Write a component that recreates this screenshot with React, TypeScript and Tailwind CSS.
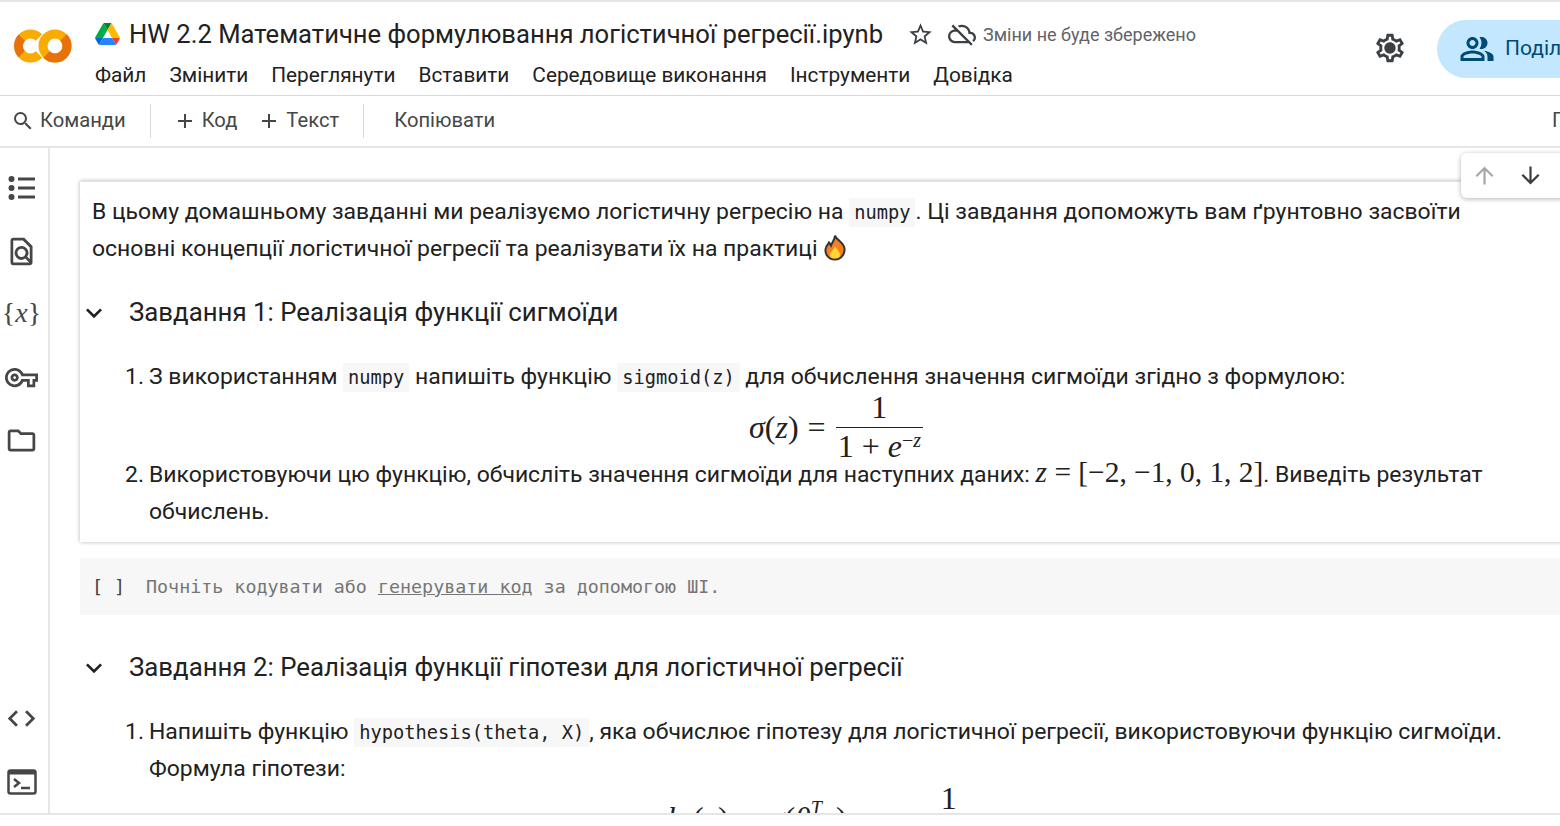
import {
  MdAdd,
  MdArrowDownward,
  MdArrowUpward,
  MdCode,
  MdKeyboardArrowDown,
  MdOutlineCloudOff,
  MdOutlineFindInPage,
  MdOutlineFolder,
  MdOutlinePeopleAlt,
  MdOutlineSettings,
  MdOutlineVpnKey,
  MdSearch,
  MdStarBorder,
} from 'react-icons/md';

const menu = ['Файл', 'Змінити', 'Переглянути', 'Вставити', 'Середовище виконання', 'Інструменти', 'Довідка'];

function ColabLogo() {
  return (
    <svg width="58" height="34" viewBox="0 0 58 34" className="shrink-0">
      <circle cx="41" cy="17" r="12" fill="none" stroke="#f9ab00" strokeWidth="9" />
      <path d="M49.500 8.500A12 12 0 0 1 32.500 25.500" fill="none" stroke="#e8710a" strokeWidth="9" />
      <path d="M25 8.500A12 12 0 0 0 8 8.500" fill="none" stroke="#f9ab00" strokeWidth="9" />
      <path d="M8 8.500A12 12 0 0 0 8 25.500" fill="none" stroke="#e8710a" strokeWidth="9" />
      <path d="M8 25.500A12 12 0 0 0 25 25.500" fill="none" stroke="#f9ab00" strokeWidth="9" />
    </svg>
  );
}

function DriveLogo() {
  return (
    <svg width="25" height="22" viewBox="0 0 87.3 78" className="shrink-0">
      <path d="m6.6 66.85 3.85 6.65c.8 1.4 1.95 2.5 3.3 3.3l13.75-23.8h-27.5c0 1.55.4 3.1 1.2 4.5z" fill="#0066da" />
      <path d="m43.65 25-13.75-23.8c-1.35.8-2.5 1.9-3.3 3.3l-25.4 44a9.06 9.06 0 0 0 -1.2 4.5h27.5z" fill="#00ac47" />
      <path d="m73.55 76.8c1.35-.8 2.5-1.9 3.3-3.3l1.6-2.75 7.65-13.25c.8-1.4 1.2-2.95 1.2-4.5h-27.502l5.852 11.5z" fill="#ea4335" />
      <path d="m43.65 25 13.75-23.8c-1.35-.8-2.9-1.2-4.5-1.2h-18.5c-1.6 0-3.15.45-4.5 1.2z" fill="#00832d" />
      <path d="m59.8 53h-32.3l-13.75 23.8c1.35.8 2.9 1.2 4.5 1.2h50.8c1.6 0 3.15-.45 4.5-1.2z" fill="#2684fc" />
      <path d="m73.4 26.5-12.7-22c-.8-1.4-1.95-2.5-3.3-3.3l-13.75 23.8 16.15 28h27.45c0-1.55-.4-3.1-1.2-4.5z" fill="#ffba00" />
    </svg>
  );
}

function Flame() {
  return (
    <svg width="24" height="27" viewBox="0 0 24 27" className="inline-block align-[-5px]">
      <path d="M12 1.500c1 4 7 6 9 11 2 6-2 13-9 13S1 19.500 3 13.500c.6-2 2-3 3-5 1 1 1.500 2 2 3 1-3 4-6 4-10z" fill="#f4811f" stroke="#333" strokeWidth="2" />
      <path d="M12 12c1 3 5 5 5 9 0 2.500-2 3.500-5 3.500s-5-1-5-3.500c0-3 4-5 5-9z" fill="#fdd835" />
    </svg>
  );
}

function ListIcon() {
  return (
    <svg width="28" height="24" viewBox="0 0 28 24" className="shrink-0">
      <circle cx="3.500" cy="3" r="3" fill="#444746" />
      <circle cx="3.500" cy="12" r="3" fill="#444746" />
      <circle cx="3.500" cy="21" r="3" fill="#444746" />
      <path d="M10 3h17M10 12h17M10 21h17" stroke="#444746" strokeWidth="3" />
    </svg>
  );
}

function Code({children}: {children: React.ReactNode}) {
  return (
    <code className="bg-[#f7f7f7] px-[5px] py-[4px] font-['DejaVu_Sans_Mono','Liberation_Mono',monospace] text-[18.7px] leading-none text-[#212121]">
      {children}
    </code>
  );
}

function Var({children}: {children: React.ReactNode}) {
  return <span className="italic">{children}</span>;
}

function Heading({children}: {children: React.ReactNode}) {
  return (
    <div className="flex h-[37px] items-center text-[25.8px] text-[#212121]">
      <MdKeyboardArrowDown size={32} className="ml-[-14px] mr-[19px] shrink-0 text-[#212121]" />
      <span>{children}</span>
    </div>
  );
}

function Item({n, children}: {n: number; children: React.ReactNode}) {
  return (
    <div className="flex pl-[33px]">
      <span className="w-[24px] shrink-0">{n}.</span>
      <div className="min-w-0 flex-1">{children}</div>
    </div>
  );
}

function Fraction({top, bottom}: {top: React.ReactNode; bottom: React.ReactNode}) {
  return (
    <span className="inline-flex flex-col items-center">
      <span className="px-[2px] leading-[40px]">{top}</span>
      <span className="h-px w-full bg-[#212121]" />
      <span className="px-[2px] leading-[36px]">{bottom}</span>
    </span>
  );
}

export default function App() {
  const serif = "font-['Liberation_Serif',serif]";

  return (
    <div className="flex h-[826px] w-[1560px] flex-col overflow-hidden bg-white font-['Roboto',sans-serif] text-[#212121]">
      <div className="h-[2px] shrink-0 bg-[#e6e6e6]" />

      <header className="flex h-[94px] shrink-0 items-start border-b border-[#dadada]">
        <div className="ml-[14px] mt-[27px]">
          <ColabLogo />
        </div>
        <div className="ml-[23px] flex-1 pt-[16px]">
          <div className="flex h-[32px] items-center">
            <DriveLogo />
            <span className="ml-[9px] text-[25.6px] text-[#212121]">
              HW 2.2 Математичне формулювання логістичної регресії.ipynb
            </span>
            <MdStarBorder size={27} className="ml-[24px] text-[#3c4043]" />
            <MdOutlineCloudOff size={28} className="ml-[14px] text-[#3c4043]" />
            <span className="ml-[7px] text-[18px] text-[#5f6368]">Зміни не буде збережено</span>
          </div>
          <nav className="mt-[10px] flex gap-[23px] text-[20.8px] font-[450] text-[#212121]">
            {menu.map(item => (
              <span key={item}>{item}</span>
            ))}
          </nav>
        </div>
        <div className="relative mr-[30px] mt-[29px] shrink-0">
          <MdOutlineSettings size={34} className="text-[#3c4043]" />
          <span className="absolute left-[12px] top-[12px] size-[10px] rounded-full bg-[#3c4043]" />
        </div>
        <div className="mr-[-120px] mt-[18px] flex h-[58px] w-[243px] shrink-0 items-center rounded-[29px] bg-[#c2e7ff] pl-[22px]">
          <MdOutlinePeopleAlt size={36} className="shrink-0 text-[#004a77]" />
          <span className="ml-[10px] text-[21px] text-[#004a77]">Поділитися</span>
        </div>
      </header>

      <div className="flex h-[52px] shrink-0 items-center border-b-2 border-[#e6e6e6] pb-[1px] text-[20.2px] text-[#444746]">
        <MdSearch size={24} className="ml-[11px] shrink-0" />
        <span className="ml-[5px]">Команди</span>
        <span className="ml-[24px] h-[34px] w-px bg-[#dadada]" />
        <MdAdd size={24} className="ml-[22px] shrink-0" />
        <span className="ml-[5px]">Код</span>
        <MdAdd size={24} className="ml-[20px] shrink-0" />
        <span className="ml-[5px]">Текст</span>
        <span className="ml-[24px] h-[34px] w-px bg-[#dadada]" />
        <span className="ml-[30px]">Копіювати</span>
        <span className="ml-auto mr-[-6px] w-[14px]">П</span>
      </div>

      <div className="relative flex min-h-0 flex-1">
        <aside className="flex w-[50px] shrink-0 flex-col items-center border-r-2 border-[#e6e6e6] pr-[5px] pt-[28px] text-[#444746]">
          <ListIcon />
          <MdOutlineFindInPage size={33} className="mt-[35px]" />
          <span className={`mt-[28px] h-[34px] text-[28px] leading-[34px] ${serif}`}>
            {'{'}
            <span className="italic">x</span>
            {'}'}
          </span>
          <MdOutlineVpnKey size={33} className="mt-[31px]" />
          <MdOutlineFolder size={33} className="mt-[30px]" />
          <MdCode size={33} className="mt-auto" />
          <svg width="30" height="26" viewBox="0 0 30 26" className="mb-[18px] mt-[34px]">
            <rect x="1.500" y="1.500" width="27" height="23" rx="2" fill="none" stroke="#444746" strokeWidth="2.500" />
            <rect x="1.500" y="1.500" width="27" height="4" fill="#444746" />
            <path d="M7 10l5 4-5 4" fill="none" stroke="#444746" strokeWidth="2.500" />
            <path d="M14 19h9" stroke="#444746" strokeWidth="2.500" />
          </svg>
        </aside>

        <main className="min-w-0 flex-1 overflow-hidden pl-[30px] pt-[33px] text-[22.950px] leading-[37px]">
          <section className="mr-[-20px] h-[361px] border-t border-[#e3e3e3] pl-[12px] pr-[50px] shadow-[0_0_4px_rgba(0,0,0,0.3)]">
            <p className="pt-[11px]">
              В цьому домашньому завданні ми реалізуємо логістичну регресію на <Code>numpy</Code>. Ці завдання допоможуть вам ґрунтовно засвоїти основні концепції логістичної регресії та реалізувати їх на практиці <Flame />
            </p>
            <div className="mt-[27px]">
              <Heading>Завдання 1: Реалізація функції сигмоїди</Heading>
            </div>
            <div className="mt-[27px]">
              <Item n={1}>
                З використанням <Code>numpy</Code> напишіть функцію <Code>sigmoid(z)</Code> для обчислення значення сигмоїди згідно з формулою:
                <div className={`flex h-[61px] items-center justify-center pr-[7px] text-[32px] ${serif}`}>
                  <span className="mr-[10px] mt-[3px] [word-spacing:1px]">
                    <Var>σ</Var>(<Var>z</Var>) =
                  </span>
                  <Fraction
                    top="1"
                    bottom={
                      <>
                        1 + <Var>e</Var>
                        <sup className="text-[20px]">
                          −<Var>z</Var>
                        </sup>
                      </>
                    }
                  />
                </div>
              </Item>
              <Item n={2}>
                Використовуючи цю функцію, обчисліть значення сигмоїди для наступних даних:{' '}
                <span className={`text-[29.4px] leading-none ${serif}`}>
                  <Var>z</Var> = [−2, −1, 0, 1, 2]
                </span>
                . Виведіть результат обчислень.
              </Item>
            </div>
          </section>

          <div className="mr-[-20px] mt-[16px] flex h-[57px] items-center bg-[#f7f7f7] pl-[12px] font-['DejaVu_Sans_Mono','Liberation_Mono',monospace] text-[18.350px]">
            <span className="w-[54px] whitespace-pre text-[#424242]">[ ]</span>
            <span className="text-[#767676]">
              Почніть кодувати або <span className="underline">генерувати код</span> за допомогою ШІ.
            </span>
          </div>

          <section className="pl-[12px] pr-[50px]">
            <div className="mt-[34px]">
              <Heading>Завдання 2: Реалізація функції гіпотези для логістичної регресії</Heading>
            </div>
            <div className="mt-[27px]">
              <Item n={1}>
                Напишіть функцію <Code>hypothesis(theta, X)</Code>, яка обчислює гіпотезу для логістичної регресії, використовуючи функцію сигмоїди. Формула гіпотези:
                <div className={`mt-[-9px] flex items-start justify-center pl-[20px] text-[32px] ${serif}`}>
                  <span className="mr-[10px] mt-[22px] whitespace-nowrap [word-spacing:3px]">
                    <Var>h</Var>
                    <sub className="text-[20px]">
                      <Var>θ</Var>
                    </sub>
                    (<Var>x</Var>) = <Var>σ</Var>(<Var>θ</Var>
                    <sup className="top-[-14px] text-[20px]">
                      <Var>T</Var>
                    </sup>
                    <Var>x</Var>) =
                  </span>
                  <span className="inline-flex w-[126px] justify-center leading-[40px]">1</span>
                </div>
              </Item>
            </div>
          </section>
        </main>

        <div className="absolute right-[-10px] top-[5px] flex h-[45px] w-[109px] items-center gap-[19px] rounded-l-[6px] bg-white pl-[10px] shadow-[0_1px_5px_rgba(0,0,0,0.3)]">
          <MdArrowUpward size={27} className="text-[#a8a8a8]" />
          <MdArrowDownward size={27} className="text-[#3c4043]" />
        </div>
      </div>

      <div className="relative h-[13px] shrink-0 border-t-2 border-[#e6e6e6] bg-white" />
    </div>
  );
}
